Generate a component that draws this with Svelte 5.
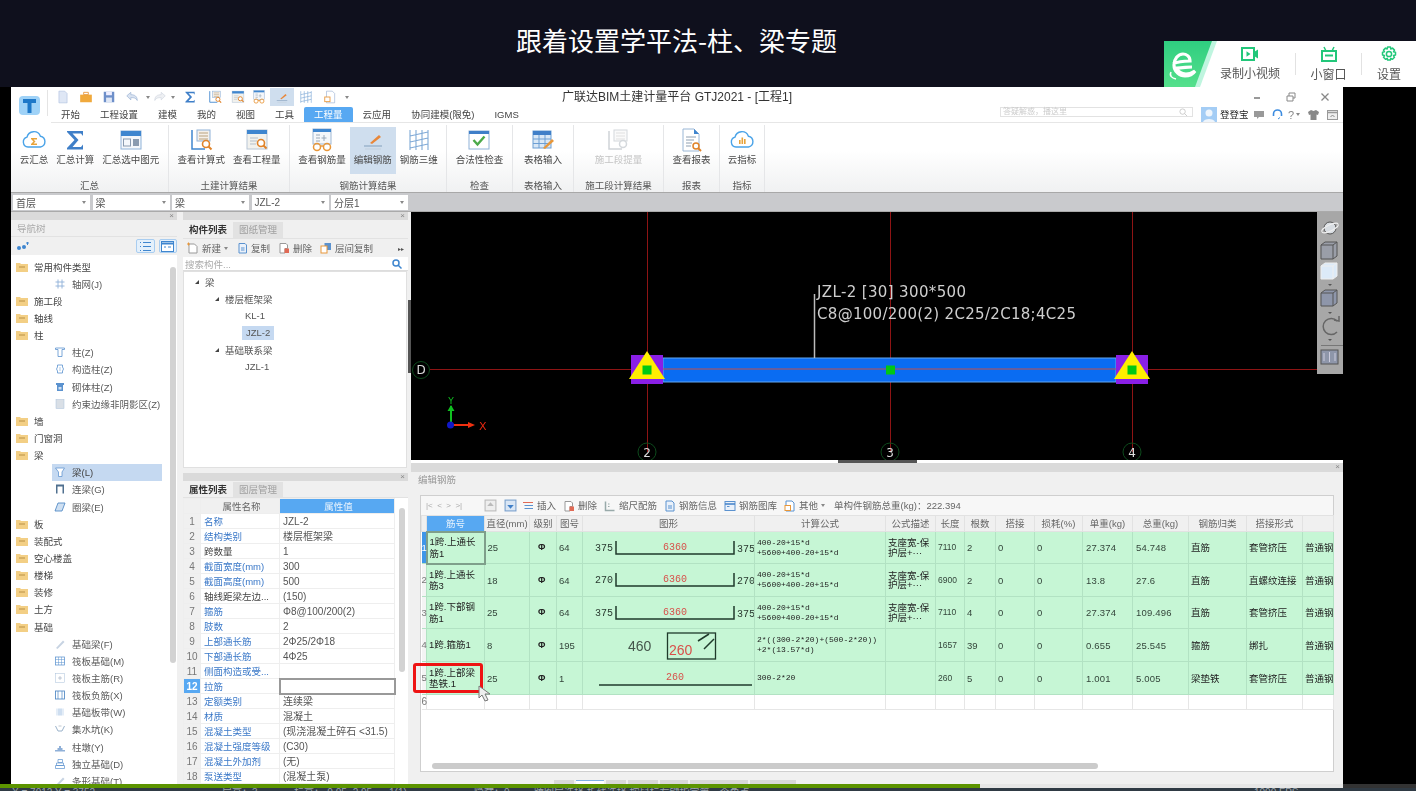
<script>
  const icons = {
    cloud: `<path d="M6 19a5 5 0 0 1-1-9.8 7 7 0 0 1 13.4-1A5.5 5.5 0 0 1 18.5 19z" fill="#fff" stroke="#4aa3e8" stroke-width="1.4"/><path d="M9 10h6v1.5H11.5l2 2-2 2H15V17H9v-1l2.5-2.500L9 11z" fill="#e8a33a"/>`,
    sigma: `<path d="M4 3h16v5l-2-2.500H9.500l6 6.500-6 7H18l2-2.500v5H4v-1.500l7.500-8-7.500-8z" fill="#3f7fc8"/>`,
    winCalc: `<rect x="2" y="3" width="20" height="18" fill="#f4f7fb" stroke="#8fb2d8"/><rect x="2" y="3" width="20" height="5" fill="#3f86cf"/><rect x="4.500" y="11" width="7" height="7" fill="none" stroke="#8a9bb0"/><rect x="14" y="11" width="6" height="7" fill="#8a9bb0"/>`,
    calcView: `<path d="M3 2v19h13" fill="none" stroke="#3f86cf" stroke-width="1.500"/><rect x="8" y="2" width="13" height="11" fill="#f5f0ea" stroke="#8fb2d8"/><path d="M10 5h9M10 8h9M10 11h9" stroke="#b9a27f"/><circle cx="17" cy="16" r="3.500" fill="#fff" stroke="#e0832a" stroke-width="1.600"/><path d="M19.500 18.500l3 3" stroke="#e0832a" stroke-width="2"/>`,
    winView: `<rect x="2" y="2" width="20" height="19" fill="#f2f2ee" stroke="#b8c6d6"/><rect x="2" y="2" width="20" height="4" fill="#3f86cf"/><path d="M5 10h8M5 13h7M5 16h6" stroke="#b5bfc9"/><circle cx="16" cy="15" r="3.500" fill="#fff" stroke="#e0832a" stroke-width="1.600"/><path d="M18.500 17.500l3 3" stroke="#e0832a" stroke-width="2"/>`,
    glasses: `<rect x="3" y="1" width="18" height="15" fill="#f5f7fa" stroke="#9fb8d4"/><rect x="3" y="1" width="18" height="3" fill="#3f86cf"/><path d="M6 7h4M6 10h4M6 13h4M14 7v6M11.500 10h5" stroke="#99a8b8"/><circle cx="7" cy="19" r="3.500" fill="none" stroke="#e8973a" stroke-width="1.500"/><circle cx="17" cy="19" r="3.500" fill="none" stroke="#e8973a" stroke-width="1.500"/><path d="M10.500 18h3" stroke="#e8973a" stroke-width="1.500"/>`,
    edit: `<path d="M3 18h18" stroke="#8fa9c4" stroke-width="1.200"/><path d="M4 21h16" stroke="#c3d0dd"/><path d="M9 15l9-8 2 2-9 7z" fill="#e8873a"/>`,
    bars3d: `<path d="M3 2v20M21 2v20M9 2v20M15 2v20M3 8l18-4M3 14l18-4M3 20l18-4" fill="none" stroke="#7fa9d6" stroke-width="1.100"/>`,
    check: `<rect x="2" y="3" width="20" height="18" fill="#fff" stroke="#8fb2d8"/><rect x="2" y="3" width="20" height="3" fill="#3f7fc8"/><path d="M6.500 12l4 4.500 7-8" fill="none" stroke="#4caa4a" stroke-width="2.400"/>`,
    tableIn: `<rect x="2" y="3" width="18" height="17" fill="#d9e8f6" stroke="#6d9fd4"/><rect x="2" y="3" width="18" height="4" fill="#3f7fc8"/><path d="M2 11h18M2 15.500h18M8 7v13M14 7v13" stroke="#6d9fd4"/><path d="M12 20l9-9 2 2-9 8z" fill="#e8973a"/>`,
    calcGhost: `<path d="M3 3v18h13" fill="none" stroke="#cfd3d8" stroke-width="1.500"/><rect x="8" y="2" width="13" height="11" fill="#fafafa" stroke="#d4d8dc"/><path d="M10 5h9M10 8h9M10 11h9" stroke="#e0e0e0"/><circle cx="17" cy="16" r="3.500" fill="#fff" stroke="#d4d8dc" stroke-width="1.500"/>`,
    report: `<path d="M4 1h11l5 5v17H4z" fill="#fff" stroke="#9ab7d6"/><path d="M15 1l5 5h-5z" fill="#3f86cf"/><path d="M7 9h10M7 12h8M7 15h6M7 18h5" stroke="#8fa0b2"/><circle cx="17" cy="18" r="3" fill="#fff" stroke="#e0832a" stroke-width="1.500"/><path d="M19 20l3 3" stroke="#e0832a" stroke-width="2"/>`,
    cloudBars: `<path d="M6 19a5 5 0 0 1-1-9.800 7 7 0 0 1 13.400-1A5.500 5.500 0 0 1 18.500 19z" fill="#fff" stroke="#4aa3e8" stroke-width="1.400"/><path d="M9 12h1.600v4H9zM11.500 9.500h1.600V16h-1.600zM14 11h1.600v5H14z" fill="#e8a33a"/>`,
    doc: `<path d="M5 2h10l4 4v16H5z" fill="#dfe7f5" stroke="#a9bcdc"/>`,
    folder: `<path d="M2 8h20v13H2z" fill="#f0a93c"/><path d="M8 4h8v4H8z" fill="none" stroke="#e8973a" stroke-width="1.500"/>`,
    save: `<rect x="3" y="3" width="18" height="18" fill="#6d8fc9"/><rect x="7" y="3" width="10" height="6" fill="#eef"/><rect x="7" y="13" width="10" height="8" fill="#dfe7f5"/>`,
    undo: `<path d="M3 10l7-6v4c7 0 11 3 11 10-2-4-5-5-11-5v4z" fill="#d9e3f1" stroke="#8fa9cf"/>`,
    redo: `<path d="M21 10l-7-6v4C7 8 3 11 3 18c2-4 5-5 11-5v4z" fill="#eef0f3" stroke="#ccd3dc"/>`,
    lock: `<path d="M6 2h10l4 4v16H6z" fill="#fff" stroke="#8fa9cf"/><rect x="3" y="12" width="9" height="8" fill="#fff" stroke="#e8973a" stroke-width="1.500"/>`,
    axis: `<path d="M8 3v18M16 3v18M3 8h18M3 16h18" stroke="#8fb0d8" stroke-width="1.800"/>`,
    col: `<path d="M3 4h18v3h-5v14H8V7H3z" fill="#fff" stroke="#5b92cf" stroke-width="1.600"/>`,
    tie: `<path d="M7 4h10v4l2 4-2 4v4H7v-4l-2-4 2-4z" fill="#fff" stroke="#5b92cf" stroke-width="1.600"/><path d="M12 8v8" stroke="#5b92cf"/>`,
    brick: `<path d="M4 4h16v4h-2v12H6V8H4z" fill="#5b92cf"/><path d="M9 12h6v5H9z" fill="#cfe0f2"/>`,
    area: `<rect x="4" y="3" width="16" height="18" fill="#d9dfe6" stroke="#a8c0da"/>`,
    beam: `<path d="M3 4h18l-5 8v9H9v-9z" fill="#fff" stroke="#5b92cf" stroke-width="1.500"/>`,
    link: `<path d="M4 3h16v18h-3V7H7v14H4z" fill="#50708f"/>`,
    ring: `<path d="M8 4h14l-6 16H2z" fill="#cfe0f2" stroke="#4d86c4" stroke-width="1.700"/>`,
    fbeam: `<path d="M4 20L18 5l3 3L7 22z" fill="#c7d3e2"/>`,
    raft: `<rect x="3" y="4" width="18" height="16" fill="#fff" stroke="#5b92cf" stroke-width="1.500"/><path d="M3 9h18M3 15h18M9 4v16M15 4v16" stroke="#5b92cf"/>`,
    main: `<rect x="3" y="3" width="18" height="18" fill="#fff" stroke="#a8c0da"/><path d="M8 12h8M12 8v8" stroke="#8a9bb0"/>`,
    neg: `<rect x="3" y="4" width="18" height="16" fill="#fff" stroke="#4d86c4" stroke-width="1.700"/><path d="M8 4v16M16 4v16" stroke="#4d86c4" stroke-width="1.400"/>`,
    strip: `<path d="M4 5h16v14H4z" fill="#e4edf7"/><path d="M10 5v14M14 5v14" stroke="#8fb0d8"/>`,
    sump: `<path d="M3 6l5 10h8l5-10" fill="none" stroke="#8fa9c4" stroke-width="1.800"/><path d="M9 6h6" stroke="#c0c8d0" stroke-width="2"/>`,
    pier: `<path d="M2 18h20v3H2zM7 14h10v4H7zM10 10h4v4h-4z" fill="#8fb0d8"/>`,
    found: `<path d="M8 3h9v6H8zM5 10h14v5H5zM3 15h18v6H3z" fill="#fff" stroke="#5b92cf" stroke-width="1.400"/>`
  }

  const qa = [
    { i: 'doc', w: 23 }, { i: 'folder', w: 23 }, { i: 'save', w: 23 }, { i: 'undo', w: 23 },
    { c: 1, w: 9 }, { i: 'redo', w: 16 }, { c: 1, w: 9 }, { i: 'sigma', w: 26 },
    { i: 'calcView', w: 24 }, { i: 'winView', w: 21 }, { i: 'glasses', w: 22 },
    { i: 'edit', w: 24, on: 1 }, { i: 'bars3d', w: 23 }, { i: 'lock', w: 25 }, { c: 1, w: 9 }
  ]

  const tabs = ['开始', '工程设置', '建模', '我的', '视图', '工具', '工程量', '云应用', '协同建模(限免)', 'IGMS']

  const ribbon = [
    { name: '汇总', w: 158, btns: [['cloud', '云汇总'], ['sigma', '汇总计算'], ['winCalc', '汇总选中图元']] },
    { name: '土建计算结果', w: 121, btns: [['calcView', '查看计算式'], ['winView', '查看工程量']] },
    { name: '钢筋计算结果', w: 157, btns: [['glasses', '查看钢筋量'], ['edit', '编辑钢筋', 'on'], ['bars3d', '钢筋三维']] },
    { name: '检查', w: 66, btns: [['check', '合法性检查']] },
    { name: '表格输入', w: 61, btns: [['tableIn', '表格输入']] },
    { name: '施工段计算结果', w: 90, btns: [['calcGhost', '施工段提量', 'off']] },
    { name: '报表', w: 56, btns: [['report', '查看报表']] },
    { name: '指标', w: 45, btns: [['cloudBars', '云指标']] }
  ]

  const selects = ['首层', '梁', '梁', 'JZL-2', '分层1']

  const nav = [
    ['f', '常用构件类型'], ['axis', '轴网(J)'], ['f', '施工段'], ['f', '轴线'], ['f', '柱'],
    ['col', '柱(Z)'], ['tie', '构造柱(Z)'], ['brick', '砌体柱(Z)'], ['area', '约束边缘非阴影区(Z)'],
    ['f', '墙'], ['f', '门窗洞'], ['f', '梁'], ['beam', '梁(L)', 1], ['link', '连梁(G)'], ['ring', '圈梁(E)'],
    ['f', '板'], ['f', '装配式'], ['f', '空心楼盖'], ['f', '楼梯'], ['f', '装修'], ['f', '土方'], ['f', '基础'],
    ['fbeam', '基础梁(F)'], ['raft', '筏板基础(M)'], ['main', '筏板主筋(R)'], ['neg', '筏板负筋(X)'],
    ['strip', '基础板带(W)'], ['sump', '集水坑(K)'], ['pier', '柱墩(Y)'], ['found', '独立基础(D)'], ['fbeam', '条形基础(T)']
  ]

  const comps = [
    { t: '梁', d: 0, open: 1 }, { t: '楼层框架梁', d: 1, open: 1 }, { t: 'KL-1', d: 2 },
    { t: 'JZL-2', d: 2, sel: 1 }, { t: '基础联系梁', d: 1, open: 1 }, { t: 'JZL-1', d: 2 }
  ]

  const props = [
    ['名称', 'JZL-2', 1], ['结构类别', '楼层框架梁', 1], ['跨数量', '1'], ['截面宽度(mm)', '300', 1],
    ['截面高度(mm)', '500', 1], ['轴线距梁左边...', '(150)'], ['箍筋', 'Φ8@100/200(2)', 1], ['肢数', '2', 1],
    ['上部通长筋', '2Φ25/2Φ18', 1], ['下部通长筋', '4Φ25', 1], ['侧面构造或受...', '', 1], ['拉筋', '', 1],
    ['定额类别', '连续梁', 1], ['材质', '混凝土', 1], ['混凝土类型', '(现浇混凝土碎石 <31.5)', 1],
    ['混凝土强度等级', '(C30)', 1], ['混凝土外加剂', '(无)', 1], ['泵送类型', '(混凝土泵)', 1]
  ]

  const cols = [5, 58, 45, 27, 26, 172, 131, 50, 29, 31, 39, 48, 50, 56, 58, 56, 31]
  const heads = ['', '筋号', '直径(mm)', '级别', '图号', '图形', '计算公式', '公式描述', '长度', '根数', '搭接', '损耗(%)', '单重(kg)', '总重(kg)', '钢筋归类', '搭接形式', '']
  const sheets = [20, 28, 20, 30, 28, 58, 46]

  const longFormula = '400-20+15*d\n+5600+400-20+15*d'
  const support = '支座宽-保\n护层+···'
  const rows = [
    { h: 32, name: '1跨.上通长\n筋1', dia: '25', no: '64', fig: 'u', l: '375', f: longFormula, desc: support, len: '7110', n: '2', w1: '27.374', w2: '54.748', kind: '直筋', joint: '套管挤压' },
    { h: 33, name: '1跨.上通长\n筋3', dia: '18', no: '64', fig: 'u', l: '270', f: longFormula, desc: support, len: '6900', n: '2', w1: '13.8', w2: '27.6', kind: '直筋', joint: '直螺纹连接' },
    { h: 32, name: '1跨.下部钢\n筋1', dia: '25', no: '64', fig: 'u', l: '375', f: longFormula, desc: support, len: '7110', n: '4', w1: '27.374', w2: '109.496', kind: '直筋', joint: '套管挤压' },
    { h: 33, name: '1跨.箍筋1', dia: '8', no: '195', fig: 'box', f: '2*((300-2*20)+(500-2*20))\n+2*(13.57*d)', desc: '', len: '1657', n: '39', w1: '0.655', w2: '25.545', kind: '箍筋', joint: '绑扎' },
    { h: 33, name: '1跨.上部梁\n垫铁.1', dia: '25', no: '1', fig: 'line', f: '300-2*20', desc: '', len: '260', n: '5', w1: '1.001', w2: '5.005', kind: '梁垫铁', joint: '套管挤压' }
  ]
</script>

{#snippet icon(name, size)}
  <svg class="ic" width={size} height={size} viewBox="0 0 24 24" aria-hidden="true">{@html icons[name]}</svg>
{/snippet}

<div class="page">
  <header class="top">
    <h1>跟着设置学平法-柱、梁专题</h1>
    <div class="live">
      <div class="brand">
        <svg width="53" height="46" viewBox="0 0 53 46">
          <defs>
            <linearGradient id="gr" x1="0" y1="0" x2="0" y2="1">
              <stop offset="0" stop-color="#2fce80" />
              <stop offset="1" stop-color="#55e08c" />
            </linearGradient>
          </defs>
          <path d="M0 0H53L36 46H0z" fill="#bff5df" />
          <path d="M0 0H48L31 46H0z" fill="url(#gr)" />
          <path d="M9 23c4-2 13-3 17-3 0-5-4-7-7-7-5 0-9 5-9 11 0 7 6 11 11 11 5 0 8-2 10-5-3 2-6 3-9 3-4 0-8-2-9-6 5 0 11-1 15-1" fill="none" stroke="#fff" stroke-width="3.200" />
          <path d="M7 31c-2 4 1 6 5 7" fill="none" stroke="#fff" stroke-width="1.500" />
        </svg>
      </div>
      <div class="live-item w-rec">
        <svg width="18" height="14" viewBox="0 0 18 14">
          <rect x="1" y="1" width="12" height="12" fill="none" stroke="#22c77a" stroke-width="2" />
          <path d="M5.500 4.200L9.500 7l-4 2.800z" fill="#22c77a" />
          <path d="M13 5l4-2.500v9L13 9z" fill="#22c77a" />
        </svg>
        <span>录制小视频</span>
      </div>
      <i class="vr"></i>
      <div class="live-item w-win">
        <svg width="16" height="16" viewBox="0 0 16 16">
          <rect x="1" y="5" width="14" height="10" fill="none" stroke="#22c77a" stroke-width="2" />
          <path d="M4 9.500h8" stroke="#22c77a" stroke-width="2" />
          <path d="M5 5L3 1M11 5l2-4" stroke="#22c77a" stroke-width="1.500" />
        </svg>
        <span>小窗口</span>
      </div>
      <i class="vr"></i>
      <div class="live-item w-set">
        <svg width="16" height="16" viewBox="0 0 16 16">
          <circle cx="8" cy="8" r="2.600" fill="none" stroke="#22c77a" stroke-width="1.500" />
          <path d="M6.600 1h2.800l.4 2 1.700-.9 2 2-1 1.700 2 .5v2.800l-2 .5 1 1.700-2 2-1.700-1-.4 1.700H6.600l-.4-1.700-1.700 1-2-2 1-1.700-2-.5V6.300l2-.5-1-1.700 2-2 1.700.9z" fill="none" stroke="#22c77a" stroke-width="1.500" stroke-linejoin="round" />
        </svg>
        <span>设置</span>
      </div>
    </div>
  </header>

  <div class="stage">
    <div class="app">
      <div class="chrome">
        <div class="logo">
          <svg width="24" height="24" viewBox="0 0 24 24">
            <rect x="1" y="2" width="21" height="19" rx="4" fill="#9fd2f7" />
            <path d="M5 5h13v4h-4.500v10h-4V9H5z" fill="#1e78c8" />
          </svg>
        </div>
        <div class="chrome-main">
          <div class="qa-row">
            <div class="qa">
              {#each qa as q}
                <span class="qa-item" class:on={q.on} style="width:{q.w}px">
                  {#if q.c}<i class="caret"></i>{:else}{@render icon(q.i, 14)}{/if}
                </span>
              {/each}
            </div>
            <div class="title">广联达BIM土建计量平台 GTJ2021 - [工程1]</div>
            <div class="win-ctl">
              <svg width="10" height="10" viewBox="0 0 10 10"><path d="M2 6h6" stroke="#777" stroke-width="1.500" /></svg>
              <svg width="10" height="10" viewBox="0 0 10 10"><path d="M1 4h6v5H1zM3 4V1h6v5H7" fill="none" stroke="#888" /></svg>
              <svg width="10" height="10" viewBox="0 0 10 10"><path d="M1.500 1.500l7 7M8.500 1.500l-7 7" stroke="#888" stroke-width="1.300" /></svg>
            </div>
          </div>
          <div class="tab-row">
            {#each tabs as t, i}
              <span class="tab" class:on={i === 6}>{t}</span>
            {/each}
            <div class="user">
              <div class="find"><span>答疑解惑，播这里</span>
                <svg width="9" height="9" viewBox="0 0 10 10"><circle cx="4" cy="4" r="3" fill="none" stroke="#c8c8c8" /><path d="M6 6l3 3" stroke="#c8c8c8" /></svg>
              </div>
              <svg class="avatar" width="16" height="15" viewBox="0 0 16 15"><rect width="16" height="15" fill="#a4cdf5" /><circle cx="8" cy="6" r="3.500" fill="#eef5fc" /><path d="M2 15c1-4 11-4 12 0z" fill="#eef5fc" /></svg>
              <b>登登宝</b>
              <svg class="u1" width="12" height="10" viewBox="0 0 12 10"><path d="M1 1h10v6H6L4 9V7H1z" fill="#999" /></svg>
              <svg class="u2" width="11" height="11" viewBox="0 0 11 11"><path d="M1.500 7V5a4 4 0 0 1 8 0v2" fill="none" stroke="#3c8ce0" stroke-width="1.600" /><path d="M8 8.500L6 10" stroke="#3c8ce0" /></svg>
              <span class="q">?<i class="caret"></i></span>
              <svg class="u3" width="11" height="10" viewBox="0 0 11 10"><path d="M3 0L0 2l1 3 1.500-.5V10h6V4.500L10 5l1-3-3-2-2.500 1z" fill="#888" /></svg>
              <svg class="u4" width="11" height="10" viewBox="0 0 11 10"><rect x=".5" y=".5" width="10" height="9" fill="#eee" stroke="#999" /><path d="M0 2.500h11" stroke="#999" stroke-width="1.500" /><path d="M3.500 7l2-2 2 2" fill="none" stroke="#888" /></svg>
            </div>
          </div>
        </div>
      </div>

      <div class="ribbon">
        {#each ribbon as g}
          <section class="group" style="width:{g.w}px">
            <div class="btns">
              {#each g.btns as b}
                <div class="rbtn {b[2] || ''}">
                  <span class="rbtn-ic">{@render icon(b[0], 24)}</span>
                  <span>{b[1]}</span>
                </div>
              {/each}
            </div>
            <div class="gname">{g.name}</div>
          </section>
        {/each}
      </div>

      <div class="sel-row">
        {#each selects as s}
          <div class="combo"><span>{s}</span><i class="caret"></i></div>
        {/each}
      </div>

      <div class="main">
        <aside class="nav">
          <div class="bar"><i class="x">×</i></div>
          <div class="nav-title">导航树</div>
          <div class="nav-tools">
            <svg width="12" height="9" viewBox="0 0 12 9"><circle cx="2" cy="6" r="2" fill="#3f86cf" /><circle cx="7" cy="5" r="2" fill="#3f86cf" /><path d="M9 1h3M10.500 0v3" stroke="#3f86cf" /></svg>
            <span class="tool-btn first">
              <svg width="13" height="11" viewBox="0 0 13 11"><path d="M1 1.500h1M1 5.500h1M1 9.500h1M4 1.500h8M4 5.500h8M4 9.500h8" stroke="#3f86cf" /></svg>
            </span>
            <span class="tool-btn">
              <svg width="13" height="11" viewBox="0 0 13 11"><rect x=".5" y=".5" width="12" height="10" fill="#fff" stroke="#3f86cf" /><path d="M0 2.500h13" stroke="#3f86cf" stroke-width="2" /><path d="M3 6h2M7 6h3" stroke="#3f86cf" /></svg>
            </span>
          </div>
          <div class="nav-tree">
            <ul>
              {#each nav as n}
                <li class:kid={n[0] !== 'f'} class:sel={n[2]}>
                  {#if n[0] === 'f'}
                    <svg width="12" height="10" viewBox="0 0 12 10"><path d="M0 1h4l1 1h7v8H0z" fill="#f3cf85" /><path d="M3 5h6" stroke="#b99044" /></svg>
                  {:else}
                    {@render icon(n[0], 12)}
                  {/if}
                  <span>{n[1]}</span>
                </li>
              {/each}
            </ul>
            <i class="vscroll"></i>
          </div>
        </aside>

        <div class="mid">
          <div class="panel list">
            <div class="bar"><i class="x">×</i></div>
            <div class="ptabs"><span class="on">构件列表</span><span>图纸管理</span></div>
            <div class="ptools">
              <span class="pt">
                <svg width="12" height="12" viewBox="0 0 24 24"><path d="M4 4h11l5 5v13H4z" fill="#fff" stroke="#999" stroke-width="2" /><path d="M3 1v6M0 4h6" stroke="#e8973a" stroke-width="2" /></svg>
                新建<i class="caret"></i></span>
              <span class="pt">
                <svg width="12" height="12" viewBox="0 0 24 24"><path d="M6 3h12l3 3v16H6z" fill="#eaf1fa" stroke="#5b92cf" stroke-width="2" /><path d="M10 12h7M10 16h7" stroke="#5b92cf" stroke-width="2" /></svg>
                复制</span>
              <span class="pt">
                <svg width="12" height="12" viewBox="0 0 24 24"><path d="M4 3h12l3 3v7H14v9H4z" fill="#fff" stroke="#999" stroke-width="2" /><rect x="13" y="13" width="9" height="9" fill="#e06a55" /></svg>
                删除</span>
              <span class="pt">
                <svg width="12" height="12" viewBox="0 0 24 24"><rect x="9" y="2" width="13" height="14" fill="#5b92cf" /><rect x="2" y="8" width="12" height="14" fill="#fff" stroke="#e8973a" stroke-width="2" /></svg>
                层间复制</span>
              <span class="more">▸▸</span>
            </div>
            <div class="search"><span>搜索构件...</span>
              <svg width="10" height="10" viewBox="0 0 10 10"><circle cx="4" cy="4" r="3" fill="none" stroke="#3f86cf" stroke-width="1.500" /><path d="M6 6l3.500 3.500" stroke="#3f86cf" stroke-width="1.500" /></svg>
            </div>
            <ul class="ctree">
              {#each comps as c}
                <li class="d{c.d}">
                  {#if c.open}<i class="tri"></i>{/if}
                  <span class:sel={c.sel}>{c.t}</span>
                </li>
              {/each}
            </ul>
          </div>

          <div class="panel attrs">
            <div class="bar"><i class="x">×</i></div>
            <div class="ptabs"><span class="on">属性列表</span><span>图层管理</span></div>
            <div class="attr-body">
              <table class="ptable">
                <colgroup><col style="width:17px" /><col style="width:79px" /><col style="width:115px" /></colgroup>
                <thead>
                  <tr><th></th><th>属性名称</th><th class="on">属性值</th></tr>
                </thead>
                <tbody>
                  {#each props as p, i}
                    <tr>
                      <td class="no" class:on={i === 11}>{i + 1}</td>
                      <td class:blue={p[2]}>{p[0]}</td>
                      <td class:cur={i === 11}>{p[1]}</td>
                    </tr>
                  {/each}
                </tbody>
              </table>
              <i class="vscroll"></i>
            </div>
          </div>
        </div>

        <div class="split"><i></i></div>

        <div class="right">
          <svg class="canvas" width="932" height="248" viewBox="411 212 932 248">
            <rect x="411" y="212" width="932" height="248" fill="#000" />
            <g stroke="#8e1414" stroke-width="1">
              <path d="M647.500 212V452M890.500 212V452M1132.500 212V452M430 369.500H1317" />
            </g>
            <rect x="663" y="358" width="453" height="24" fill="#0a6cf2" stroke="#62a6f0" />
            <path d="M663 369h453" stroke="#c0504a" />
            <path d="M814.500 294v64" stroke="#bbb" stroke-width="1.500" />
            <text x="817" y="297" class="beam" textLength="149">JZL-2 [30] 300*500</text>
            <text x="817" y="319" class="beam" textLength="259">C8@100/200(2) 2C25/2C18;4C25</text>

            {#each [647, 1132] as cx}
              <rect x={cx - 16} y="355" width="32" height="29" fill="#8a1fe6" />
              <path d="M{cx} 351L{cx + 18} 379H{cx - 18}z" fill="#ffee00" />
              <rect x={cx - 4.500} y="365.500" width="9" height="9" fill="#00c814" />
            {/each}
            <rect x="886" y="365.500" width="9" height="9" fill="#00c814" />

            <g fill="none" stroke="#0d4a1c">
              <circle cx="421" cy="370" r="8.500" />
              <circle cx="647" cy="452" r="9" />
              <circle cx="890" cy="452" r="9" />
              <circle cx="1132" cy="452" r="9" />
            </g>
            <g class="bubble">
              <text x="421" y="374">D</text>
              <text x="647" y="457">2</text>
              <text x="890" y="457">3</text>
              <text x="1132" y="457">4</text>
            </g>

            <path d="M451 424v-18" stroke="#10c020" stroke-width="2" />
            <path d="M451 405l-3.500 6h7z" fill="#10c020" />
            <path d="M451 425h17" stroke="#f03010" stroke-width="2" />
            <path d="M475 425l-7-3v6z" fill="#f03010" />
            <circle cx="450.500" cy="425" r="3.500" fill="#1018c8" />
            <text x="451" y="404" class="ax-y">Y</text>
            <text x="479" y="430" class="ax-x">X</text>

            <rect x="1317" y="212" width="26" height="162" fill="#a7a7a7" />
            <g fill="none" stroke="#555">
              <circle cx="1330" cy="228" r="6" fill="#d8dde2" />
              <ellipse cx="1330" cy="228" rx="9" ry="3" transform="rotate(-25 1330 228)" stroke="#eee" />
              <path d="M1321 245h12v14h-12zM1321 245l4-3h12v14l-4 3M1333 245l4-3" fill="#9a9ea8" />
              <path d="M1321 266h12v13h-12zM1321 266l4-3h12v13l-4 3M1333 266l4-3" fill="#dceaf8" stroke="#eee" />
              <path d="M1321 293h12v13h-12zM1321 293l4-3h12v13l-4 3M1333 293l4-3" fill="#8e96aa" />
              <path d="M1337 321a8 8 0 1 0 0 11" stroke="#666" stroke-width="1.500" />
              <path d="M1334 320l5 1 0-5" stroke="#666" stroke-width="1.500" />
              <path d="M1321 345.500h22" stroke="#777" />
              <rect x="1321" y="350" width="17" height="14" fill="#8e96aa" />
              <path d="M1324 353v8M1329.500 352v10M1335 353v8" stroke="#ccd" />
            </g>
            <g fill="#555">
              <path d="M1328 284h4l-2 2zM1328 312h4l-2 2zM1328 339h4l-2 2z" />
            </g>
          </svg>

          <div class="sash"><i></i></div>

          <div class="edit">
            <div class="bar"><i class="x">×</i></div>
            <div class="edit-title">编辑钢筋</div>
            <div class="frame">
              <div class="etools">
                <span class="nav-b">|&lt;&nbsp; &lt;&nbsp; &gt;&nbsp; &gt;|</span>
                <svg width="13" height="13" viewBox="0 0 24 24"><rect x="2" y="2" width="20" height="20" fill="#eee" stroke="#bbb" stroke-width="2" /><path d="M12 6l6 7H6z" fill="#bbb" /></svg>
                <svg width="13" height="13" viewBox="0 0 24 24"><rect x="2" y="2" width="20" height="20" fill="#d9e6f5" stroke="#7aa0cc" stroke-width="2" /><path d="M12 18l6-7H6z" fill="#3f7fc8" /></svg>
                <span class="et ins">
                  <svg width="12" height="13" viewBox="0 0 24 24"><path d="M2 6h20" stroke="#e06a55" stroke-width="2" /><path d="M5 12h17M5 18h17" stroke="#5b92cf" stroke-width="2" /></svg>插入</span>
                <span class="et">
                  <svg width="12" height="12" viewBox="0 0 24 24"><path d="M4 3h12l3 3v7H14v9H4z" fill="#fff" stroke="#999" stroke-width="2" /><rect x="13" y="13" width="9" height="9" fill="#e06a55" /></svg>删除</span>
                <span class="et">
                  <svg width="12" height="12" viewBox="0 0 24 24"><path d="M3 3v18h18" fill="none" stroke="#9aa" stroke-width="3" /><path d="M8 8h3M8 13h3" stroke="#9aa" stroke-width="2" /></svg>缩尺配筋</span>
                <span class="et">
                  <svg width="12" height="12" viewBox="0 0 24 24"><path d="M4 2h12l4 4v16H4z" fill="#eaf1fa" stroke="#5b92cf" stroke-width="2" /><path d="M8 12h8M8 16h8" stroke="#5b92cf" stroke-width="2" /></svg>钢筋信息</span>
                <span class="et">
                  <svg width="12" height="12" viewBox="0 0 24 24"><rect x="2" y="3" width="20" height="18" fill="#eaf1fa" stroke="#5b92cf" stroke-width="2" /><path d="M2 8h20" stroke="#3f7fc8" stroke-width="3" /><path d="M6 13h5" stroke="#5b92cf" stroke-width="2" /></svg>钢筋图库</span>
                <span class="et">
                  <svg width="12" height="12" viewBox="0 0 24 24"><path d="M4 2h12l4 4v16H4z" fill="#fff" stroke="#5b92cf" stroke-width="2" /><rect x="2" y="11" width="11" height="10" fill="#fff" stroke="#e8973a" stroke-width="2" /></svg>其他<i class="caret"></i></span>
                <span class="weight">单构件钢筋总重(kg)：222.394</span>
              </div>

              <table class="etable">
                <colgroup>
                  {#each cols as w}<col style="width:{w}px" />{/each}
                </colgroup>
                <thead>
                  <tr>
                    {#each heads as h, i}<th class:on={i === 1}>{h}</th>{/each}
                  </tr>
                </thead>
                <tbody>
                  {#each rows as r, i}
                    <tr class="bar-row" style="height:{r.h}px">
                      <td class="rn" class:on={i === 0}><span>{i + 1}</span></td>
                      <td class="nm" class:cur={i === 0}>{r.name}</td>
                      <td class="num">{r.dia}</td>
                      <td class="lvl">Φ</td>
                      <td class="num">{r.no}</td>
                      <td class="fig">
                        {#if r.fig === 'u'}
                          <svg width="172" height="30" viewBox="0 0 172 30">
                            <text x="12" y="19" class="len">{r.l}</text>
                            <path d="M33 9v13h118V9" fill="none" stroke="#1f3a2b" stroke-width="1.500" />
                            <text x="92" y="18" class="red">6360</text>
                            <text x="154" y="20" class="len">{r.l}</text>
                          </svg>
                        {:else if r.fig === 'box'}
                          <svg width="172" height="30" viewBox="0 0 172 30">
                            <text x="45" y="22" class="big">460</text>
                            <rect x="84.500" y="4" width="48" height="26" fill="none" stroke="#1f3a2b" stroke-width="1.300" />
                            <path d="M115 12l11-7M121 20l10-10" stroke="#1f3a2b" stroke-width="1.500" />
                            <text x="86" y="26" class="big r">260</text>
                          </svg>
                        {:else}
                          <svg width="172" height="30" viewBox="0 0 172 30">
                            <text x="92" y="18" class="red">260</text>
                            <path d="M16 23h153" stroke="#1f3a2b" stroke-width="1.500" />
                          </svg>
                        {/if}
                      </td>
                      <td class="formula">{r.f}</td>
                      <td class="desc">{r.desc}</td>
                      <td class="num sm">{r.len}</td>
                      <td class="num">{r.n}</td>
                      <td class="num">0</td>
                      <td class="num">0</td>
                      <td class="num wd">{r.w1}</td>
                      <td class="num wd">{r.w2}</td>
                      <td>{r.kind}</td>
                      <td>{r.joint}</td>
                      <td class="clip">普通钢</td>
                    </tr>
                  {/each}
                  <tr class="empty">
                    <td class="rn"><span>6</span></td>
                    {#each cols.slice(1) as _}<td></td>{/each}
                  </tr>
                </tbody>
              </table>
              <i class="hscroll"></i>
              <i class="red-box"></i>
              <svg class="cursor" width="14" height="17" viewBox="0 0 14 17">
                <path d="M1 1v12l3-3 3 6 3-1-3-6h5z" fill="#eee" stroke="#777" />
              </svg>
            </div>
            <div class="sheets">
              {#each sheets as w, i}<i class:on={i === 1} style="width:{w}px"></i>{/each}
            </div>
          </div>
        </div>
      </div>
    </div>
  </div>

  <footer class="foot">
    <div class="foot-top"><i class="progress"></i><i class="foot-app"></i></div>
    <div class="status">
      <span class="s1">X = 7012 Y = 3752</span>
      <span class="s2">层高：3</span>
      <span class="s3">标高：-0.05~2.95</span>
      <span class="s4">1(1)</span>
      <span class="s5">隐藏：0</span>
      <span class="s6">跨图层选择 折线选择 按鼠标左键指定第一个角点</span>
      <span class="s7">1000 FPS</span>
    </div>
  </footer>
</div>

<style>
  :global(body) {
    margin: 0;
    background: #000;
    font-family: "Liberation Sans", "Noto Sans CJK SC", sans-serif;
    overflow: hidden;
  }

  .page {
    width: 1416px;
    height: 791px;
    display: flex;
    flex-direction: column;
    overflow: hidden;
  }

  svg {
    flex: none;
  }

  .ic {
    display: block;
  }

  i {
    font-style: normal;
    display: block;
  }

  ul {
    list-style: none;
    margin: 0;
    padding: 0;
  }

  /* top band */
  .top {
    height: 87px;
    flex: none;
    background: #0f101d;
    position: relative;
    display: flex;
  }

  h1 {
    margin: 24px 0 0 516px;
    font-size: 26px;
    line-height: 32px;
    font-weight: 400;
    color: #fff;
    white-space: nowrap;
    font-family: "Noto Sans CJK SC", sans-serif;
  }

  .live {
    position: absolute;
    right: 0;
    top: 41px;
    width: 252px;
    height: 46px;
    background: #fff;
    display: flex;
    align-items: center;
    font-family: "Noto Sans CJK SC", sans-serif;
    color: #555;
    font-size: 12px;
    filter: blur(.3px);
  }

  .brand {
    width: 53px;
    height: 46px;
  }

  .live-item {
    display: flex;
    flex-direction: column;
    align-items: center;
    gap: 4px;
    line-height: 16px;
  }

  .w-rec {
    width: 74px;
    margin-left: -4px;
    margin-right: 8px;
  }

  .w-win {
    width: 65px;
  }

  .w-set {
    width: 54px;
  }

  .vr {
    width: 1px;
    height: 22px;
    background: #e2e2e2;
  }

  /* stage */
  .stage {
    height: 697px;
    flex: none;
    padding-left: 11px;
    background: #000;
  }

  .app {
    width: 1332px;
    height: 697px;
    display: flex;
    flex-direction: column;
    background: #f0f0f0;
    color: #444;
    font-size: 9.500px;
    filter: blur(.5px);
  }

  .chrome {
    height: 36px;
    flex: none;
    display: flex;
    background: #fff;
  }

  .logo {
    width: 40px;
    padding: 7px 0 0 7px;
    box-sizing: border-box;
    position: relative;
  }

  .logo::after {
    content: "";
    position: absolute;
    right: 3px;
    top: 3px;
    height: 26px;
    width: 1px;
    background: #e4e4e4;
  }

  .chrome-main {
    flex: 1;
    display: flex;
    flex-direction: column;
    min-width: 0;
  }

  .qa-row {
    height: 20px;
    display: flex;
    align-items: center;
  }

  .qa {
    display: flex;
    align-items: center;
    width: 300px;
    flex: none;
  }

  .qa-item {
    display: flex;
    justify-content: center;
    align-items: center;
    height: 18px;
    flex: none;
  }

  .qa-item.on {
    background: #cfdeee;
  }

  .caret {
    width: 0;
    height: 0;
    border: 2px solid transparent;
    border-top: 3px solid #888;
    border-bottom: 0;
  }

  .title {
    margin-left: 211px;
    width: 232px;
    white-space: nowrap;
    font-size: 12px;
    color: #333;
    line-height: 14px;
  }

  .win-ctl {
    margin-left: auto;
    margin-right: 13px;
    display: flex;
    gap: 24px;
  }

  .tab-row {
    height: 16px;
    display: flex;
    align-items: stretch;
    border-bottom: 1px solid #e6e6e6;
    box-sizing: border-box;
    line-height: 16px;
  }

  .tab {
    padding: 0 10px;
    white-space: nowrap;
  }

  .tab.on {
    background: #57a8f2;
    color: #fff;
    border-radius: 2px 2px 0 0;
    padding: 0 10px;
  }

  .user {
    margin-left: auto;
    display: flex;
    align-items: center;
    padding-right: 5px;
    height: 15px;
  }

  .find {
    width: 193px;
    height: 10px;
    margin-bottom: 5px;
    box-sizing: border-box;
    border: 1px solid #e2e2e2;
    display: flex;
    justify-content: space-between;
    align-items: center;
    padding: 0 4px 0 2px;
    color: #ccc;
    font-size: 8px;
    line-height: 8px;
  }

  .avatar {
    margin-left: 8px;
  }

  .user b {
    margin-left: 3px;
    font-weight: 400;
    color: #222;
    width: 28px;
    white-space: nowrap;
  }

  .u1 {
    margin-left: 5px;
  }

  .u2 {
    margin-left: 7px;
  }

  .q {
    margin-left: 5px;
    width: 14px;
    color: #888;
    font-size: 11px;
    display: flex;
    align-items: center;
    gap: 2px;
  }

  .u3 {
    margin-left: 6px;
  }

  .u4 {
    margin-left: 8px;
  }

  /* ribbon */
  .ribbon {
    height: 69px;
    flex: none;
    display: flex;
    background: linear-gradient(#fff 0, #fff 40%, #f0f1f2 100%);
  }

  .group {
    box-sizing: border-box;
    border-right: 1px solid #e5e6e8;
    display: flex;
    flex-direction: column;
    align-items: center;
    margin-top: 2px;
  }

  .btns {
    display: flex;
    height: 48px;
  }

  .rbtn {
    padding: 3px 4px 0;
    display: flex;
    flex-direction: column;
    align-items: center;
    white-space: nowrap;
    line-height: 13px;
    color: #484848;
    height: 45px;
  }

  .rbtn.on {
    background: #cfdeee;
    margin-top: 2px;
    padding-top: 1px;
    height: 46px;
  }

  .rbtn.off {
    color: #c4c4c4;
  }

  .rbtn-ic {
    height: 25px;
  }

  .gname {
    margin-top: 7px;
    line-height: 12px;
    color: #555;
  }

  .sel-row {
    height: 20px;
    flex: none;
    box-sizing: border-box;
    border-top: 1px solid #a8a8a8;
    border-bottom: 1px solid #aaa;
    background: #c9cacd;
    padding: 2px 2px 0;
    display: flex;
    gap: 2.500px;
  }

  .combo {
    width: 77px;
    height: 15px;
    background: #fff;
    display: flex;
    justify-content: space-between;
    align-items: center;
    padding: 0 4px 0 3px;
    box-sizing: border-box;
    color: #555;
    font-size: 10px;
  }

  .main {
    height: 572px;
    flex: none;
    display: flex;
    overflow: hidden;
  }

  .bar {
    height: 8px;
    background: #dadada;
    flex: none;
    display: flex;
    justify-content: flex-end;
  }

  .x {
    color: #888;
    font-size: 8px;
    line-height: 8px;
    margin-right: 3px;
  }

  /* navigation */
  .nav {
    width: 166px;
    flex: none;
    display: flex;
    flex-direction: column;
    background: #fff;
  }

  .nav-title {
    height: 16px;
    flex: none;
    line-height: 17px;
    padding-left: 6px;
    color: #aaa;
    background: #f0f0f0;
    font-size: 9.500px;
  }

  .nav-tools {
    height: 19px;
    flex: none;
    background: #f0f0f0;
    border-top: 1px solid #e2e2e2;
    box-sizing: border-box;
    display: flex;
    align-items: center;
    padding-left: 6px;
    gap: 4px;
  }

  .tool-btn {
    width: 19px;
    height: 14px;
    box-sizing: border-box;
    border: 1px solid #a9cdf0;
    background: #e4f0fb;
    border-radius: 2px;
    display: flex;
    align-items: center;
    justify-content: center;
  }

  .tool-btn.first {
    margin-left: 103px;
  }

  .nav-tree {
    flex: 1;
    min-height: 0;
    position: relative;
    overflow: hidden;
    padding-top: 3px;
  }

  .nav-tree li {
    height: 17.150px;
    display: flex;
    align-items: center;
    gap: 6px;
    padding-left: 5px;
    white-space: nowrap;
  }

  .nav-tree li.kid {
    padding-left: 43px;
    gap: 6px;
    width: 110px;
    color: #5a5a5a;
  }

  .nav-tree li.sel {
    background: #c5d9f1;
    margin-left: 41px;
    padding-left: 2px;
    width: 108px;
    color: #444;
  }

  .vscroll {
    position: absolute;
    width: 6px;
    border-radius: 3px;
    background: #d2d2d2;
  }

  .nav .vscroll {
    left: 159px;
    top: 12px;
    height: 396px;
  }

  /* middle column */
  .mid {
    width: 225px;
    margin-left: 6px;
    flex: none;
    display: flex;
    flex-direction: column;
    gap: 3px;
  }

  .panel {
    display: flex;
    flex-direction: column;
    min-height: 0;
    background: #f0f0f0;
  }

  .list {
    height: 258px;
    flex: none;
  }

  .attrs {
    flex: 1;
  }

  .ptabs {
    height: 16px;
    flex: none;
    margin-top: 2px;
    display: flex;
    line-height: 16px;
  }

  .attrs .ptabs {
    height: 15px;
    margin-top: 1px;
  }

  .ptabs span {
    width: 50px;
    text-align: center;
    color: #a0a0a0;
    background: #e2e2e2;
  }

  .ptabs .on {
    background: #f0f0f0;
    color: #333;
    font-weight: 700;
  }

  .ptools {
    height: 18px;
    flex: none;
    display: flex;
    align-items: center;
    gap: 8px;
    padding-left: 4px;
    border-top: 1px solid #e2e2e2;
    color: #666;
  }

  .pt {
    display: flex;
    align-items: center;
    gap: 3px;
    white-space: nowrap;
  }

  .more {
    margin-left: auto;
    margin-right: 4px;
    font-size: 6px;
    color: #555;
  }

  .search {
    height: 13px;
    flex: none;
    background: #fff;
    display: flex;
    justify-content: space-between;
    align-items: center;
    padding: 0 6px 0 2px;
    color: #aaa;
    border-bottom: 1px solid #ddd;
  }

  .ctree {
    flex: 1;
    margin: 0 1px 2px 0;
    background: #fff;
    border: 1px solid #e0e0e0;
  }

  .ctree li {
    height: 17px;
    display: flex;
    align-items: center;
    position: relative;
    color: #555;
  }

  .ctree li:first-child {
    margin-top: 1px;
  }

  .ctree .d0 {
    padding-left: 21px;
  }

  .ctree .d1 {
    padding-left: 41px;
  }

  .ctree .d2 {
    padding-left: 61px;
  }

  .ctree .sel {
    background: #c5d9f1;
    margin-left: -3px;
    padding: 1px 4px 2px;
  }

  .tri {
    position: absolute;
    width: 0;
    height: 0;
    margin-left: -10px;
    border-left: 4px solid transparent;
    border-bottom: 4px solid #444;
  }

  .attr-body {
    flex: 1;
    min-height: 0;
    position: relative;
    background: #fff;
    overflow: hidden;
    border-top: 1px solid #e2e2e2;
  }

  .ptable {
    table-layout: fixed;
    width: 211px;
    border-collapse: collapse;
    font-size: 9.500px;
  }

  .ptable th,
  .ptable td {
    height: 15px;
    padding: 0 0 0 3px;
    border: 1px solid #eee;
    white-space: nowrap;
    overflow: hidden;
    box-sizing: border-box;
    line-height: 13px;
    font-weight: 400;
  }

  .ptable th {
    background: #f0f0f0;
    color: #666;
    text-align: center;
  }

  .ptable th.on {
    background: #57a8f2;
    color: #e8f3fd;
  }

  .ptable .no {
    background: #f0f0f0;
    color: #777;
    text-align: center;
    padding: 0;
    font-size: 10px;
  }

  .ptable .no.on {
    background: #57a8f2;
    color: #fff;
    font-weight: 700;
  }

  .ptable .blue {
    color: #3a78c8;
  }

  .ptable td:last-child {
    color: #555;
    font-size: 10px;
  }

  .ptable .cur {
    border: 2px solid #999;
  }

  .attrs .vscroll {
    left: 216px;
    top: 10px;
    height: 164px;
  }

  .split {
    width: 3px;
    flex: none;
    background: #f0f0f0;
  }

  .split i {
    margin-top: 88px;
    height: 73px;
    background: #555;
  }

  /* right side */
  .right {
    width: 932px;
    flex: none;
    display: flex;
    flex-direction: column;
  }

  .canvas {
    display: block;
  }

  .canvas text {
    font-family: "DejaVu Sans", sans-serif;
  }

  .beam {
    font-size: 15px;
    fill: #cfcfcf;
  }

  .bubble text {
    font-size: 12px;
    fill: #ddd;
    text-anchor: middle;
  }

  .ax-y {
    font-size: 9px;
    fill: #10c020;
    text-anchor: middle;
  }

  .ax-x {
    font-size: 11px;
    fill: #e82810;
  }

  .sash {
    height: 3px;
    flex: none;
    background: #fff;
  }

  .sash i {
    margin-left: 427px;
    width: 79px;
    height: 3px;
    background: #555;
  }

  .edit {
    flex: 1;
    min-height: 0;
    display: flex;
    flex-direction: column;
    background: #f0f0f0;
  }

  .edit .bar {
    height: 9px;
  }

  .edit-title {
    height: 16px;
    flex: none;
    line-height: 15px;
    padding-left: 7px;
    color: #999;
  }

  .frame {
    margin: 7px 9px 0 9px;
    height: 277px;
    flex: none;
    box-sizing: border-box;
    border: 1px solid #cfcfcf;
    background: #fff;
    position: relative;
    overflow: visible;
  }

  .etools {
    height: 19px;
    display: flex;
    align-items: center;
    gap: 7px;
    padding-left: 5px;
    background: #f7f7f7;
    color: #666;
    white-space: nowrap;
    overflow: hidden;
    line-height: 17px;
  }

  .nav-b {
    color: #aaa;
    font-size: 8px;
    width: 51px;
  }

  .et {
    display: flex;
    align-items: center;
    gap: 3px;
  }

  .et.ins {
    margin-left: -2px;
  }

  .weight {
    margin-left: 2px;
  }

  .etable {
    table-layout: fixed;
    width: 912px;
    border-collapse: collapse;
    font-size: 9.500px;
  }

  .etable th {
    height: 16px;
    box-sizing: border-box;
    line-height: 13px;
    padding: 0;
    background: #f0f0f0;
    border: 1px solid #e2e2e2;
    font-weight: 400;
    color: #666;
    white-space: nowrap;
    overflow: hidden;
  }

  .etable th.on {
    background: #57a8f2;
    color: #eaf4fd;
  }

  .bar-row td {
    background: #c6f6d5;
    border: 1px solid #b2e2c3;
    padding: 0 0 0 2px;
    color: #222;
    line-height: 11px;
    white-space: pre-line;
    overflow: hidden;
    box-sizing: border-box;
  }

  .etable .rn {
    padding: 0;
    overflow: visible;
    position: relative;
    border-left: 0;
    color: #777;
    background: #f4f4f4;
  }

  .rn span {
    position: absolute;
    left: 0;
    top: 50%;
    margin-top: -6px;
    line-height: 12px;
  }

  .etable .rn.on {
    background: #3f96e8;
    color: #fff;
  }

  .bar-row .nm {
    font-size: 9.500px;
    line-height: 11.500px;
  }

  .bar-row .cur {
    border: 2px solid #7f9f8b;
  }

  .bar-row .num {
    color: #33443a;
  }

  .bar-row .sm {
    font-size: 8.500px;
  }

  .bar-row .wd {
    font-size: 9.500px;
    letter-spacing: .2px;
    padding-left: 3px;
  }

  .bar-row .lvl {
    text-align: left;
    padding-left: 8px;
    font-size: 9px;
    font-weight: 700;
  }

  .bar-row .fig {
    padding: 0;
    vertical-align: top;
  }

  .fig svg {
    display: block;
    overflow: visible;
  }

  .fig text {
    font-family: "Liberation Mono", monospace;
    font-size: 10px;
    fill: #2a3a30;
  }

  .fig .red {
    fill: #d8504a;
    text-anchor: middle;
  }

  .fig .big {
    font-size: 14px;
    fill: #45564c;
    font-family: "Liberation Sans", sans-serif;
  }

  .fig .big.r {
    fill: #d8504a;
  }

  .bar-row .formula {
    font-family: "Liberation Mono", monospace;
    font-size: 8px;
    line-height: 10px;
    padding-left: 2px;
  }

  .bar-row .desc {
    line-height: 9.500px;
  }

  .bar-row .clip {
    white-space: nowrap;
  }

  .empty {
    height: 15px;
  }

  .empty td {
    border: 1px solid #e6e6e6;
    padding: 0;
    height: 15px;
    box-sizing: border-box;
  }

  .empty .rn {
    background: #fff;
    font-size: 10px;
  }

  .hscroll {
    position: absolute;
    left: 11px;
    width: 666px;
    bottom: 2px;
    height: 6px;
    border-radius: 3px;
    background: #cbcbcb;
  }

  .red-box {
    position: absolute;
    left: -8px;
    top: 167px;
    width: 70px;
    height: 30px;
    box-sizing: border-box;
    border: 3px solid #ee1313;
    border-radius: 3px;
  }

  .cursor {
    position: absolute;
    left: 57px;
    top: 189px;
  }

  .sheets {
    display: flex;
    gap: 2px;
    margin: 8px 0 0 143px;
    height: 4px;
  }

  .sheets i {
    background: #d8d8d8;
  }

  .sheets .on {
    background: #fff;
    border-top: 1px solid #7fb0e6;
  }

  /* bottom strip */
  .foot {
    flex: none;
    height: 7px;
    background: #2f3a44;
    overflow: hidden;
  }

  .foot-top {
    height: 4px;
    display: flex;
    background: #333;
  }

  .progress {
    width: 980px;
    background: #5c9400;
  }

  .foot-app {
    width: 363px;
    background: #e6e6e6;
  }

  .status {
    height: 3px;
    overflow: hidden;
    display: flex;
    color: #9aa3ab;
    font-size: 10px;
    line-height: 10px;
    white-space: nowrap;
  }

  .s1 {
    margin-left: 12px;
    width: 210px;
  }

  .s2 {
    width: 72px;
  }

  .s3 {
    width: 95px;
  }

  .s4 {
    width: 85px;
  }

  .s5 {
    width: 60px;
  }

  .s6 {
    width: 720px;
  }
</style>
